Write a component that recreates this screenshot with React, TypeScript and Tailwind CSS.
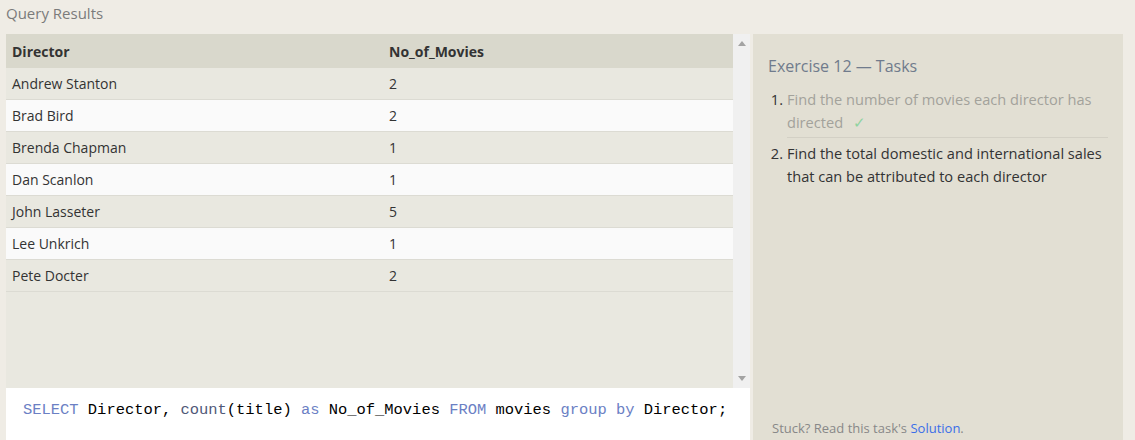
const rows: [string, number][] = [
  ["Andrew Stanton", 2],
  ["Brad Bird", 2],
  ["Brenda Chapman", 1],
  ["Dan Scanlon", 1],
  ["John Lasseter", 5],
  ["Lee Unkrich", 1],
  ["Pete Docter", 2],
]

const ResultsTable = () => {
  return (
    <div className="flex h-[354px]">
      <div className="flex-1 bg-[#e9e8e0] text-[14px] text-[#333]">
        <div className="grid grid-cols-[377px_1fr] h-[34px] items-center bg-[#d9d8cc] font-bold">
          <div className="pl-[6px]">Director</div>
          <div className="pl-[6px]">No_of_Movies</div>
        </div>
        {rows.map(([name, count], i) => (
          <div
            key={name}
            className={
              i % 2 === 0
                ? "grid grid-cols-[377px_1fr] h-[32px] items-center bg-[#e9e8e0] border-b border-b-[#dcdbd3]"
                : "grid grid-cols-[377px_1fr] h-[32px] items-center bg-[#fafafa] border-b border-b-[#dcdbd3]"
            }
          >
            <div className="pl-[6px]">{name}</div>
            <div className="pl-[6px]">{count}</div>
          </div>
        ))}
      </div>
      <div className="w-[17px] bg-[#f0f0f0] flex flex-col justify-between items-center py-[7px]">
        <svg width="8" height="5" viewBox="0 0 8 5">
          <path d="M4 0 L8 5 L0 5 Z" fill="#a3a3a3" />
        </svg>
        <svg width="8" height="5" viewBox="0 0 8 5">
          <path d="M0 0 L8 0 L4 5 Z" fill="#a3a3a3" />
        </svg>
      </div>
    </div>
  )
}

const Editor = () => {
  return (
    <div className="flex-1 bg-white pl-[17px] pt-[11px] font-['Liberation_Mono',monospace] text-[15.45px] text-black whitespace-pre">
      <span className="text-[#6b80c4]">SELECT</span> Director,{" "}
      <span className="text-[#4f5878]">count</span>(title){" "}
      <span className="text-[#6b80c4]">as</span> No_of_Movies{" "}
      <span className="text-[#6b80c4]">FROM</span> movies{" "}
      <span className="text-[#6b80c4]">group</span>{" "}
      <span className="text-[#6b80c4]">by</span> Director;
    </div>
  )
}

const Tasks = () => {
  return (
    <div className="w-[370px] bg-[#e2dfd3] flex flex-col pl-[15px] pr-[8px] pt-[20px] pb-[2px]">
      <h2 className="text-[16px] text-[#707b8c]">Exercise 12 — Tasks</h2>
      <ol className="mt-[10px] text-[14.6px] leading-[23px]">
        <li className="flex">
          <span className="w-[19px] shrink-0 text-right pr-[4px] text-[#333]">1.</span>
          <div className="flex-1 text-[#a3a29b] border-b border-b-[#d3d0c5] pb-[3px] mr-[7px]">
            Find the number of movies each director has directed
            <span className="ml-[10px] text-[#8fd3a0]">✓</span>
          </div>
        </li>
        <li className="flex pt-[4px]">
          <span className="w-[19px] shrink-0 text-right pr-[4px] text-[#333]">2.</span>
          <div className="flex-1 text-[#333]">
            Find the total domestic and international sales that can be attributed to each director
          </div>
        </li>
      </ol>
      <p className="mt-auto text-[13px] text-[#888] pl-[4px]">
        Stuck? Read this task's <a className="text-[#3a6ee8]" href="#">Solution</a>.
      </p>
    </div>
  )
}

export default function App() {
  return (
    <div className="w-[1135px] h-[440px] bg-[#efece5] font-['Open_Sans',sans-serif] overflow-hidden flex flex-col">
      <div className="h-[34px] pl-[6px] pt-[2px] text-[15px] text-[#7b7b7b]">Query Results</div>
      <div className="flex flex-1 pl-[6px] pr-[12px] gap-[3px]">
        <div className="w-[744px] flex flex-col">
          <ResultsTable />
          <Editor />
        </div>
        <Tasks />
      </div>
    </div>
  )
}
